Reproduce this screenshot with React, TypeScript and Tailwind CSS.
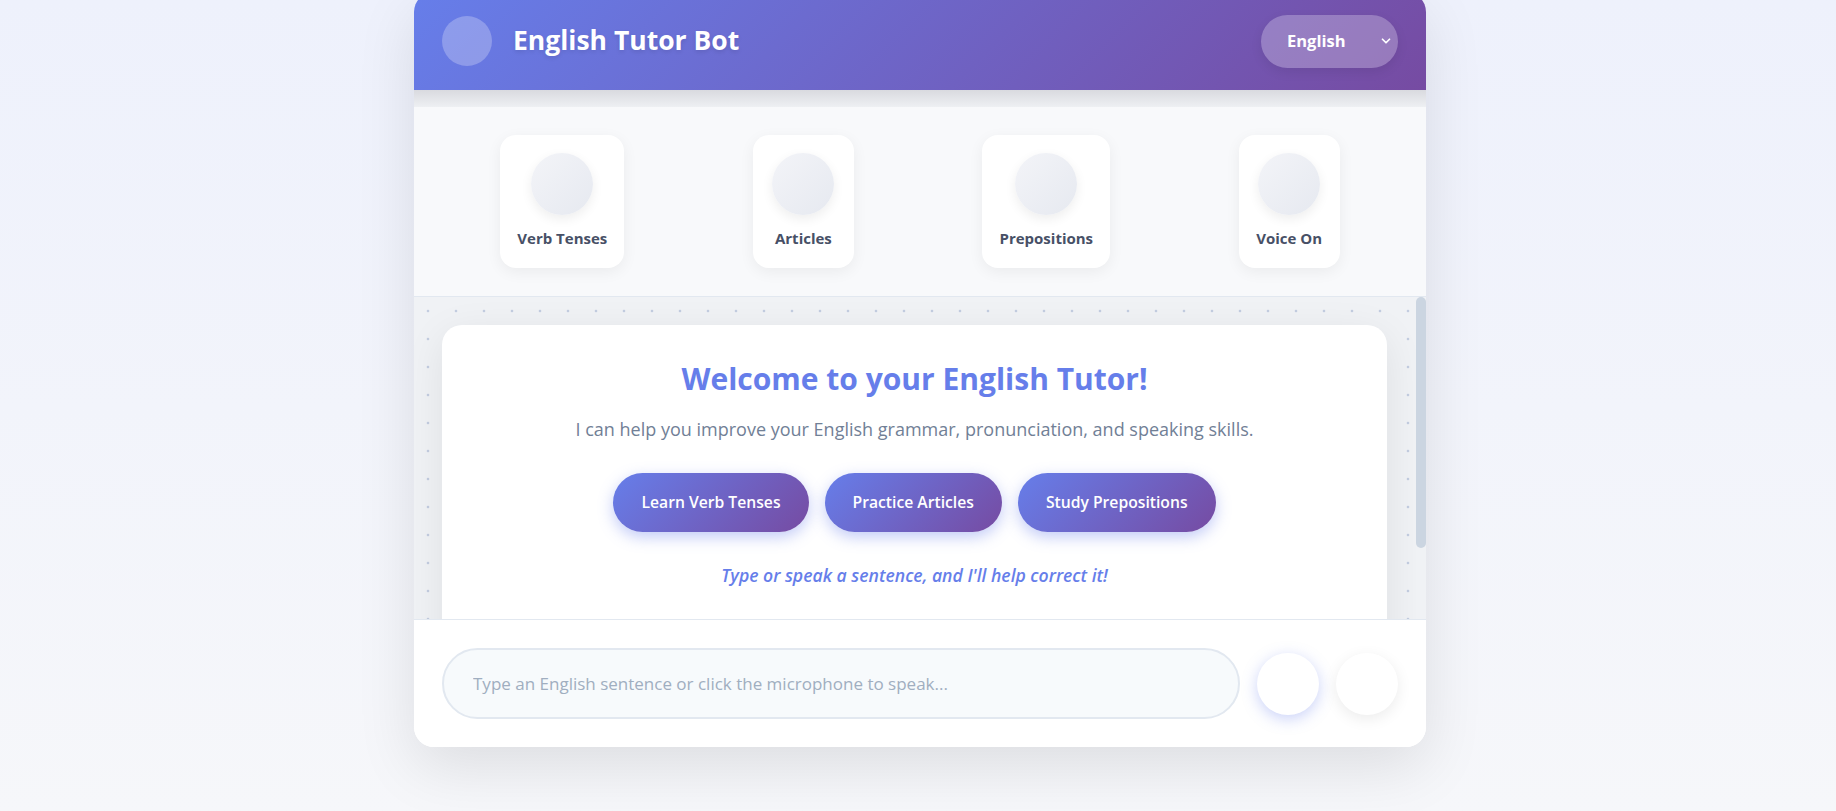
import React from "react";

const ToolCard = ({ label }: { label: string }) => (
  <div className="flex flex-col items-center bg-white rounded-[16px] pt-[18px] pb-[20px] px-[17px] min-w-[101px] shadow-[0_4px_15px_rgba(0,0,0,0.06)]">
    <div className="w-[62px] h-[62px] rounded-full bg-gradient-to-br from-[#f3f4f8] to-[#e6e9f0] shadow-[0_4px_12px_rgba(0,0,0,0.07)]" />
    <div className="mt-[13px] text-[15px] leading-[20px] font-bold text-[#475066] whitespace-nowrap">{label}</div>
  </div>
);

const PillButton = ({ label }: { label: string }) => (
  <button className="h-[59px] px-7 rounded-full bg-[linear-gradient(135deg,#667eea_0%,#764ba2_100%)] text-white font-semibold text-[15.7px] shadow-[0_5px_15px_rgba(102,126,234,0.4)] whitespace-nowrap">
    {label}
  </button>
);

export default function App() {
  return (
    <div className="min-h-screen w-full bg-gradient-to-b from-[#eef1fc] to-[#f6f7fa] flex justify-center pl-1 font-['Open_Sans',sans-serif]">
      <div className="w-[1012px] h-[755px] -mt-2 bg-white rounded-[20px] shadow-[0_20px_60px_rgba(0,0,0,0.1)] flex flex-col overflow-hidden">
        {/* Header */}
        <div className="h-[98px] shrink-0 px-7 flex items-center justify-between bg-[linear-gradient(135deg,#667eea_0%,#764ba2_100%)]">
          <div className="flex items-center gap-[21px]">
            <div className="w-[50px] h-[50px] rounded-full bg-white/25" />
            <h1 className="text-[26.5px] font-bold text-white [text-shadow:0_2px_4px_rgba(0,0,0,0.1)]">English Tutor Bot</h1>
          </div>
          <div className="w-[137px] h-[53px] rounded-full bg-white/25 flex items-center justify-between pl-[26px] pr-[5px] shadow-[0_4px_12px_rgba(0,0,0,0.08)]">
            <span className="text-[16.5px] font-bold text-white">English</span>
            <svg width="14" height="14" viewBox="0 0 24 24" fill="none" stroke="white" strokeWidth="3" strokeLinecap="round" strokeLinejoin="round">
              <path d="M6 9l6 6 6-6" />
            </svg>
          </div>
        </div>
        {/* Shadow band */}
        <div className="h-[17px] shrink-0 bg-gradient-to-b from-[#d9dadf] to-[#eef0f3]" />
        {/* Toolbar */}
        <div className="shrink-0 py-7 px-[22px] flex justify-around bg-[#f8f9fb] border-b border-[#e2e8f0]">
          <ToolCard label="Verb Tenses" />
          <ToolCard label="Articles" />
          <ToolCard label="Prepositions" />
          <ToolCard label="Voice On" />
        </div>
        {/* Chat */}
        <div className="flex-1 min-h-0 flex bg-[#f0f2f5] bg-[radial-gradient(circle,#c3cde0_1px,transparent_1.7px)] bg-[length:28px_28px]">
          <div className="flex-1 min-w-0 overflow-hidden pt-7 pl-7 pr-[29px]">
            <div className="bg-white rounded-[20px] shadow-[0_10px_40px_rgba(0,0,0,0.08)] pt-[35px] pb-[94px] flex flex-col items-center text-center">
              <h2 className="text-[30px] leading-[38px] font-bold text-[#667eea]">Welcome to your English Tutor!</h2>
              <p className="mt-[18px] text-[18px] leading-[27px] text-[#718096]">
                I can help you improve your English grammar, pronunciation, and speaking skills.
              </p>
              <div className="mt-[30px] flex gap-4">
                <PillButton label="Learn Verb Tenses" />
                <PillButton label="Practice Articles" />
                <PillButton label="Study Prepositions" />
              </div>
              <p className="mt-[30px] text-[17.6px] leading-[26px] italic font-semibold text-[#667eea]">
                Type or speak a sentence, and I'll help correct it!
              </p>
            </div>
          </div>
          {/* scrollbar */}
          <div className="w-[10px] shrink-0">
            <div className="h-[251px] rounded-full bg-[#cbd5e1]" />
          </div>
        </div>
        {/* Input */}
        <div className="shrink-0 border-t border-[#e2e8f0] p-7 flex items-center gap-[17px] bg-white">
          <input
            className="flex-1 h-[71px] rounded-full border-2 border-[#e2e8f0] bg-[#f7fafc] px-[29px] text-[17px] text-[#2d3748] placeholder:text-[#a0aec0] outline-none"
            placeholder="Type an English sentence or click the microphone to speak..."
          />
          <button className="w-[62px] h-[62px] rounded-full bg-white shadow-[0_4px_15px_rgba(102,126,234,0.35)]" />
          <button className="w-[62px] h-[62px] rounded-full bg-white shadow-[0_4px_15px_rgba(0,0,0,0.08)]" />
        </div>
      </div>
    </div>
  );
}
